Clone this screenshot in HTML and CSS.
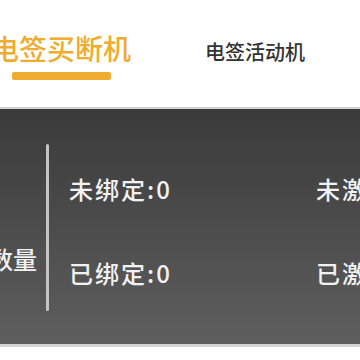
FILE: index.html
```html
<!DOCTYPE html>
<html lang="zh-CN">
<head>
    <meta charset="UTF-8">
    <meta name="viewport" content="width=device-width, initial-scale=1.0">
    <title>机具统计</title>
    <link rel="stylesheet" href="styles.css">
</head>
<body>
    <div class="page">
        <!-- Tabs -->
        <div class="tabs">
            <div class="tab active">
                <span class="tab-text">电签买断机</span>
                <span class="tab-bar"></span>
            </div>
            <div class="tab">
                <span class="tab-text">电签活动机</span>
            </div>
        </div>

        <!-- Stats panel -->
        <div class="panel">
            <div class="panel-label">机具数量</div>
            <div class="divider"></div>
            <div class="stats">
                <div class="stat">未绑定:0</div>
                <div class="stat">未激活:0</div>
                <div class="stat">已绑定:0</div>
                <div class="stat">已激活:0</div>
            </div>
        </div>
    </div>
</body>
</html>
```

FILE: styles.css
```css
* {
    margin: 0;
    padding: 0;
    box-sizing: border-box;
}

body {
    background-color: #fff;
    font-family: "Noto Sans CJK SC", "Noto Sans", sans-serif;
    overflow: hidden;
}

.page {
    width: 560px;
    margin-left: -9px;
}

.tabs {
    display: flex;
    height: 109px;
    border-bottom: 2px solid #d2d2d2;
}

.tab {
    display: flex;
    flex-direction: column;
    align-items: center;
    flex-shrink: 0;
}

.tab.active {
    width: 140px;
    padding-top: 33px;
}

.tab.active .tab-text {
    font-size: 28px;
    line-height: 30px;
    font-weight: 500;
    color: #efac2e;
}

.tab-bar {
    width: 99px;
    height: 8px;
    margin-top: 9px;
    border-radius: 2px;
    background-color: #efac2e;
}

.tab:not(.active) {
    margin-left: 74px;
    padding-top: 41px;
}

.tab:not(.active) .tab-text {
    font-size: 20px;
    line-height: 22px;
    font-weight: 500;
    color: #333;
}

.panel {
    display: flex;
    align-items: flex-start;
    height: 238px;
    background: linear-gradient(to bottom, #3a3a3a, #5e5e5e);
    border-bottom: 3px solid #d4d4d4;
    color: #f2f2f2;
}

.panel-label {
    flex-shrink: 0;
    width: 46px;
    margin-top: 137px;
    font-size: 24px;
    line-height: 26px;
    font-weight: 500;
    white-space: nowrap;
    direction: rtl;
    overflow: hidden;
}

.divider {
    flex-shrink: 0;
    width: 3px;
    height: 167px;
    margin-top: 35px;
    margin-left: 9px;
    border-radius: 2px;
    background-color: #c4c4c4;
}

.stats {
    flex-shrink: 0;
    display: grid;
    grid-template-columns: 247px 200px;
    row-gap: 58px;
    margin-top: 67px;
    margin-left: 20px;
}

.stat {
    font-size: 24px;
    line-height: 26px;
    font-weight: 500;
    letter-spacing: 2px;
    white-space: nowrap;
}
```
